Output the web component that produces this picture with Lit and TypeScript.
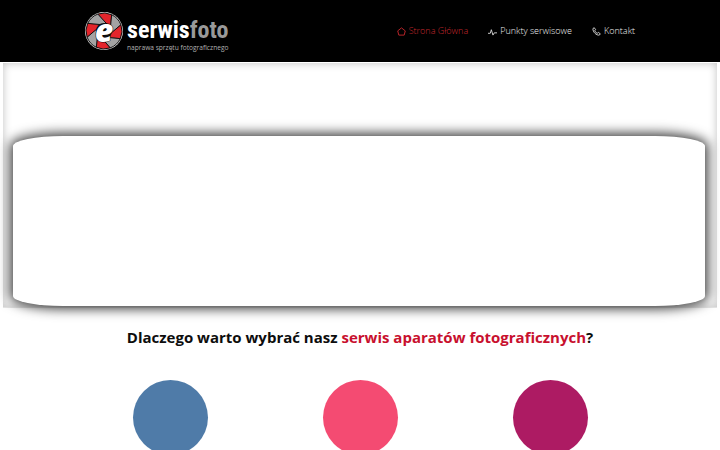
import { LitElement, html, css, svg } from "lit";
import { customElement } from "lit/decorators.js";

const pt = (r: number, deg: number) => {
  const a = (deg * Math.PI) / 180;
  return `${(19 + r * Math.cos(a)).toFixed(2)} ${(19 + r * Math.sin(a)).toFixed(2)}`;
};
const blades = Array.from({ length: 8 }, (_, i) => {
  const a = -110 + i * 45;
  const d = `M${pt(18, a)}A18 18 0 0 1 ${pt(18, a + 45)}L${pt(7, a + 100)}Z`;
  return svg`<path d=${d} fill=${i % 2 ? "#a3a3a3" : "#e3252b"} stroke="#111" stroke-width="1"/>`;
});

@customElement("app-root")
export class AppRoot extends LitElement {
  static styles = css`
    :host { display: block; height: 450px; overflow: hidden; background: #fff; font-family: "Open Sans", sans-serif; }
    .top { height: 62px; background: #000; display: flex; align-items: flex-start; padding: 0 85px; box-sizing: border-box; justify-content: space-between; }
    .logo { display: flex; margin-top: 12px; gap: 4px; }
    .mark { position: relative; width: 38px; height: 38px; }
    .mark svg { display: block; }
    .e { position: absolute; inset: 0; text-align: center; font: italic 800 32px/36px "Open Sans", sans-serif; color: #fff; -webkit-text-stroke: 1px #000; paint-order: stroke fill; }
    .brand { display: flex; flex-direction: column; margin-top: 6px; }
    .name { font: 700 24px/24px "Roboto Condensed", "Liberation Sans Narrow", "Open Sans", sans-serif; color: #fff; }
    .name span { color: #999; }
    .tag { font: 400 6.62px/9px "Open Sans", sans-serif; color: #b0b0b0; white-space: nowrap; margin-top: 1px; }
    nav { display: flex; gap: 20px; margin: 24px 0 0 0; }
    .item { display: flex; align-items: center; gap: 3px; font-size: 9px; line-height: 14px; color: #f2f2f2; font-weight: 300; white-space: nowrap; }
    .item.on { color: #c8282e; }
    .hero { height: 245px; margin: 1px 3px 0; box-sizing: border-box; padding: 73px 12px 0 10px; box-shadow: inset 0 0 8px rgba(0,0,0,.25); border-bottom: 1px solid #e4e4e4; }
    .card { height: 170px; background: #fff; box-shadow: 0 0 12px 3px rgba(0,0,0,.75); border-radius: 50px / 10px; }
    h2 { margin: 17px 0 0; text-align: center; font-size: 15px; line-height: 24px; font-weight: 700; color: #0d0d0d; }
    h2 span { color: #c8102e; }
    .circles { display: flex; justify-content: center; gap: 115px; margin-top: 31px; }
    .c { width: 75px; height: 75px; border-radius: 50%; }
    .blue { background: #4f7ba8; }
    .pink { background: #f44b72; }
    .plum { background: #ad1b63; }
  `;
  render() {
    return html`
      <div class="top">
        <div class="logo">
          <div class="mark">
            <svg width="38" height="38" viewBox="0 0 38 38">
              <circle cx="19" cy="19" r="19" fill="#ddd"/>
              ${blades}
              <circle cx="19" cy="19" r="8" fill="#111"/>
            </svg>
            <div class="e">e</div>
          </div>
          <div class="brand">
            <div class="name">serwis<span>foto</span></div>
            <div class="tag">naprawa sprzętu fotograficznego</div>
          </div>
        </div>
        <nav>
          <div class="item on"><svg width="9" height="9" viewBox="0 0 10 10" fill="none" stroke="#c8282e"><path d="M.8 4.300 5 1l4.200 3.300L8 9H2Z"/></svg>Strona Główna</div>
          <div class="item"><svg width="9" height="9" viewBox="0 0 10 10" fill="none" stroke="#ddd"><path d="M0 7h2.500l1.200-4L5.500 9 7 6.500h3"/></svg>Punkty serwisowe</div>
          <div class="item"><svg width="9" height="9" viewBox="0 0 10 10" fill="none" stroke="#ddd"><path d="M1 1.800 2.500.8 4 3 3 4.200C3.600 5.600 4.500 6.500 5.800 7L7 6l2.200 1.500L8.200 9C4.800 9.500.8 5.500 1 1.800Z"/></svg>Kontakt</div>
        </nav>
      </div>
      <div class="hero"><div class="card"></div></div>
      <h2>Dlaczego warto wybrać nasz <span>serwis aparatów fotograficznych</span>?</h2>
      <div class="circles">
        <div class="c blue"></div>
        <div class="c pink"></div>
        <div class="c plum"></div>
      </div>
    `;
  }
}
